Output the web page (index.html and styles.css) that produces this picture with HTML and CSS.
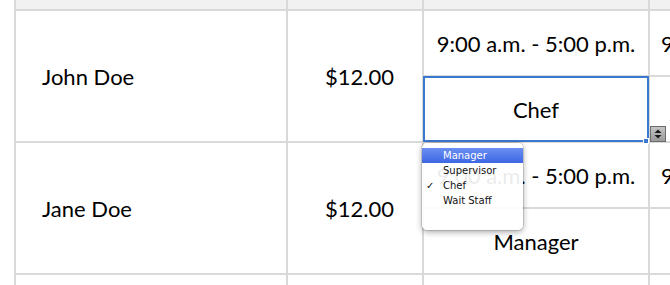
FILE: index.html
```html
<!DOCTYPE html>
<html>
<head>
<meta charset="utf-8">
<link rel="stylesheet" href="styles.css">
</head>
<body>
<div class="sheet">
  <div class="gutter"></div>
  <div class="hdr"></div><div class="hdr"></div><div class="hdr"></div><div class="hdr"></div>

  <div class="cell name">John Doe</div>
  <div class="cell rate">$12.00</div>
  <div class="split">
    <div class="sub">9:00 a.m. - 5:00 p.m.</div>
    <div class="sub editing">Chef</div>
  </div>
  <div class="split">
    <div class="sub left">9:00 a.m. - 5:00 p.m.</div>
    <div class="sub"></div>
  </div>

  <div class="cell name">Jane Doe</div>
  <div class="cell rate">$12.00</div>
  <div class="split">
    <div class="sub">9:00 a.m. - 5:00 p.m.</div>
    <div class="sub">Manager</div>
  </div>
  <div class="split">
    <div class="sub left">9:00 a.m. - 5:00 p.m.</div>
    <div class="sub"></div>
  </div>

  <div class="cell"></div><div class="cell"></div><div class="cell"></div><div class="cell"></div>

  <div class="handle"></div>
  <div class="spinner">
    <svg width="14" height="14" viewBox="0 0 14 14">
      <path d="M7 2.5 L10.5 6 L3.5 6 Z" fill="#1a1a1a"/>
      <path d="M7 11.5 L10.5 8 L3.5 8 Z" fill="#1a1a1a"/>
    </svg>
  </div>
  <ul class="menu">
    <li class="item active">Manager</li>
    <li class="item">Supervisor</li>
    <li class="item checked">Chef</li>
    <li class="item">Wait Staff</li>
  </ul>
</div>
</body>
</html>
```
FILE: styles.css
```css
html, body {
  margin: 0;
  padding: 0;
  background: #fff;
}
.sheet {
  position: relative;
  width: 670px;
  height: 285px;
  overflow: hidden;
  display: grid;
  grid-template-columns: 14px 270px 134px 224px 1fr;
  grid-template-rows: 9px 130px 130px 1fr;
  gap: 2px;
  background: #d9d9d9;
  font-family: Lato, "Open Sans", sans-serif;
  font-size: 22px;
  color: #000;
}
.gutter {
  grid-column: 1;
  grid-row: 1 / 5;
  background: #fff;
}
.hdr {
  background: #f1f1f1;
}
.cell {
  background: #fff;
  display: flex;
  align-items: center;
  white-space: nowrap;
}
.name {
  padding-left: 26px;
}
.rate {
  justify-content: flex-end;
  padding-right: 28px;
}
.split {
  display: grid;
  grid-template-rows: 64px 64px;
  gap: 2px;
}
.sub {
  background: #fff;
  display: flex;
  align-items: center;
  justify-content: center;
  white-space: nowrap;
  overflow: hidden;
}
.sub.left {
  justify-content: flex-start;
  padding-left: 11px;
}
.editing {
  outline: 2px solid #3b78d0;
  outline-offset: -1px;
  position: relative;
  z-index: 1;
}
.handle {
  position: absolute;
  left: 643px;
  top: 138px;
  width: 4px;
  height: 4px;
  background: #3b78d0;
  border: 1px solid #fff;
  z-index: 2;
}
.spinner {
  position: absolute;
  left: 650px;
  top: 126px;
  width: 16px;
  height: 16px;
  box-sizing: border-box;
  border: 1px solid #6d6d6d;
  background: linear-gradient(#c4c4c4, #9a9a9a);
  display: flex;
  align-items: center;
  justify-content: center;
  z-index: 2;
}
.spinner svg {
  display: block;
}
.menu {
  position: absolute;
  left: 422px;
  top: 143px;
  width: 101px;
  height: 87px;
  box-sizing: border-box;
  margin: 0;
  padding: 5px 0 0;
  list-style: none;
  background: rgba(255, 255, 255, 0.92);
  border-radius: 5px;
  box-shadow: 0 2px 6px rgba(0, 0, 0, 0.35), 0 0 0 1px rgba(0, 0, 0, 0.12);
  font-family: "DejaVu Sans", sans-serif;
  font-size: 10px;
  color: #111;
  z-index: 3;
}
.item {
  position: relative;
  height: 15px;
  line-height: 15px;
  padding-left: 21px;
}
.item.active {
  background: linear-gradient(#6b8ff2, #3d66e4);
  color: #fff;
}
.item.checked::before {
  content: "\2713";
  position: absolute;
  left: 4px;
  top: 0;
  font-size: 10px;
}
```
